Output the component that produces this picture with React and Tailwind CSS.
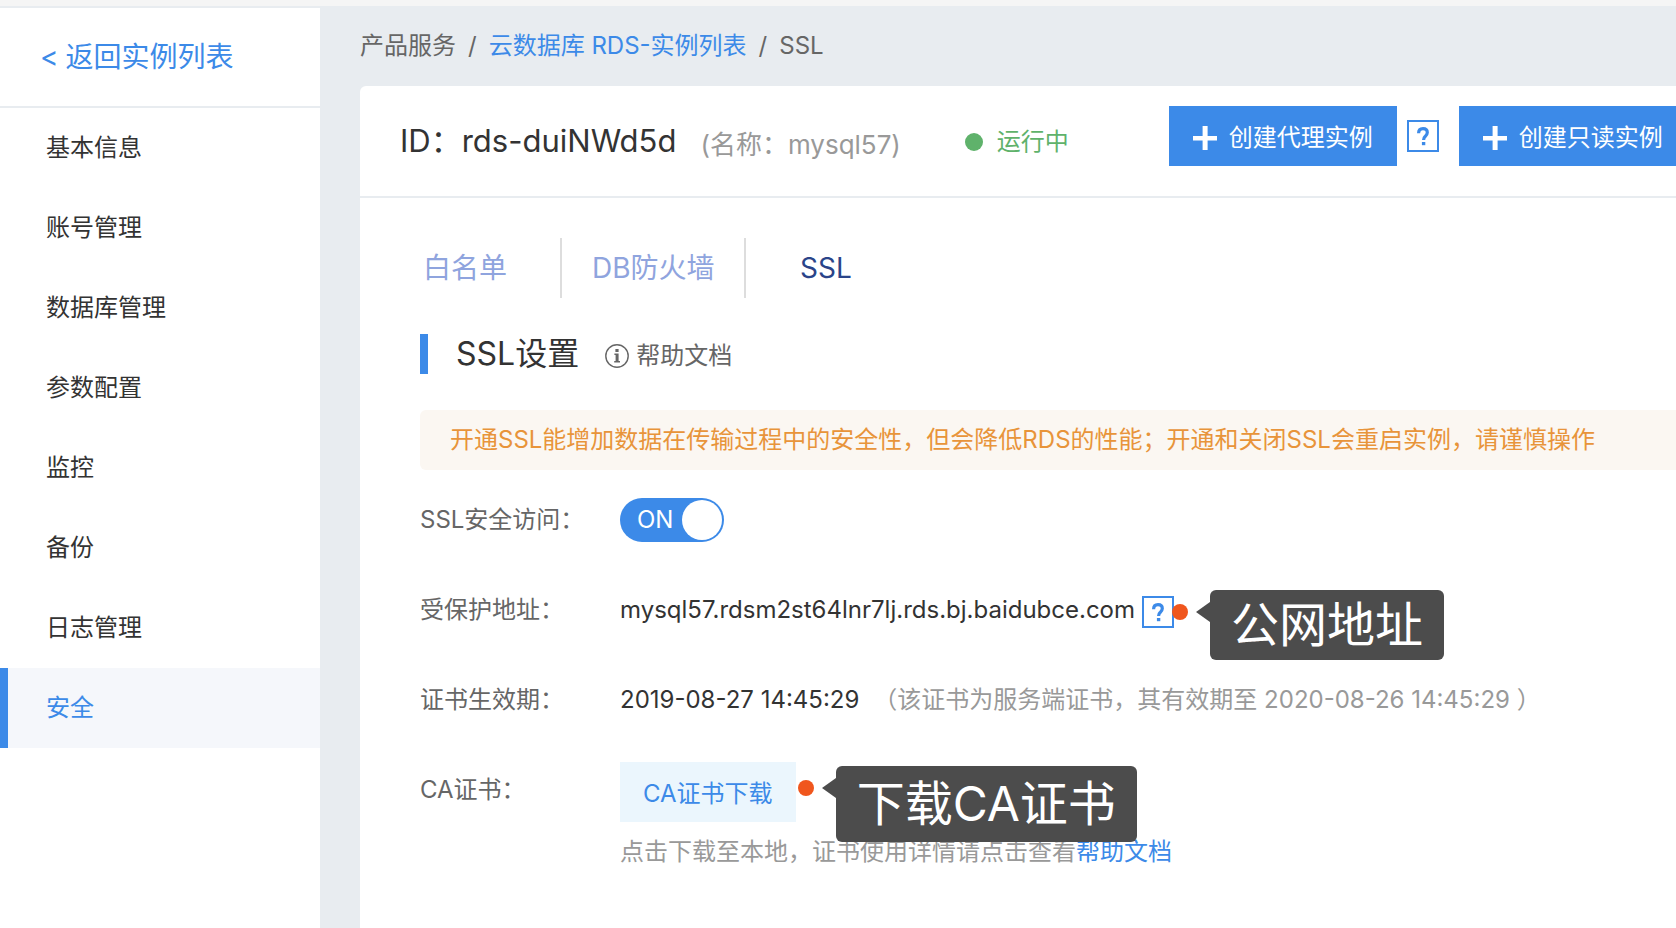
import { useState } from "react";

const NAV = [
  "基本信息",
  "账号管理",
  "数据库管理",
  "参数配置",
  "监控",
  "备份",
  "日志管理",
  "安全",
];

function Plus() {
  return (
    <svg className="h-6 w-6 shrink-0" viewBox="0 0 24 24" aria-hidden="true">
      <path d="M0 10h24v4.6H0z M9.6 0h5v24h-5z" fill="#fff" />
    </svg>
  );
}

function HelpBox({ label }) {
  return (
    <button
      type="button"
      aria-label={label}
      className="flex h-8 w-8 shrink-0 items-center justify-center border-2 border-[#3c8ae8] bg-white"
    >
      <svg className="h-5 w-4" viewBox="0 0 16 20" aria-hidden="true">
        <path
          d="M3.6 7.2C3.6 4.2 5.4 2.6 8 2.6c2.7 0 4.3 1.5 4.3 3.9 0 1.9-1 2.8-2.2 4-1.3 1.2-1.5 2-1.5 3.4"
          fill="none"
          stroke="#3c8ae8"
          strokeWidth="3.2"
        />
        <path d="M6.9 16h3.4v3.2H6.9z" fill="#3c8ae8" />
      </svg>
    </button>
  );
}

function CreateButton({ children }) {
  return (
    <button
      type="button"
      className="flex h-[60px] shrink-0 items-center gap-3 bg-[#3c8ae8] px-6 pt-1 text-white"
    >
      <Plus />
      {children}
    </button>
  );
}

function Callout({ children, className, bubbleClassName }) {
  return (
    <div className={`absolute left-full z-10 flex items-start ${className}`}>
      <span className="mt-[14px] h-4 w-4 shrink-0 rounded-full bg-[#f0561d]" />
      <svg className="mt-3 ml-2 h-5 w-[14px] shrink-0" viewBox="0 0 14 20" aria-hidden="true">
        <path d="M0 10L14 0v20z" fill="#4c4c4c" />
      </svg>
      <span
        className={`rounded-md bg-[#4c4c4c] px-[21px] text-5xl whitespace-nowrap text-white ${bubbleClassName}`}
      >
        {children}
      </span>
    </div>
  );
}

function Row({ label, children }) {
  return (
    <div className="flex">
      <div className="w-[200px] shrink-0 leading-[60px] text-[#666]">{label}</div>
      <div className="min-w-0 flex-1 whitespace-nowrap">{children}</div>
    </div>
  );
}

export default function App() {
  const [on, setOn] = useState(true);
  return (
    <div className="flex min-h-screen flex-col overflow-hidden border-t-6 border-[#f5f5f5] bg-[#e8ecf0] pt-0.5 font-['Inter','Noto_Sans_CJK_SC',sans-serif] text-2xl font-normal text-[#333]">
      <div className="flex flex-1">
        <aside className="w-80 shrink-0 bg-white">
          <div className="flex h-[100px] items-center border-b-2 border-[#e8ecf0] pl-10">
            <a href="#list" className="flex gap-[7px] text-[28px] leading-10 text-[#3c8ae8]">
              <span>&lt;</span>
              返回实例列表
            </a>
          </div>
          <nav>
            {NAV.map((item) =>
              item === "安全" ? (
                <a
                  key={item}
                  href="#nav"
                  aria-current="page"
                  className="block border-l-8 border-[#3c8ae8] bg-[#f5f7fb] pl-[38px] leading-[80px] text-[#3c8ae8]"
                >
                  {item}
                </a>
              ) : (
                <a key={item} href="#nav" className="block pl-[46px] leading-[80px]">
                  {item}
                </a>
              ),
            )}
          </nav>
        </aside>

        <div className="flex min-w-0 flex-1 flex-col pl-10">
          <div className="flex h-[78px] items-center gap-3 pb-0.5 whitespace-nowrap text-[#666]">
            <span>产品服务</span>
            <span>/</span>
            <a href="#rds" className="text-[#3c8ae8]">
              云数据库 RDS-实例列表
            </a>
            <span>/</span>
            <span>SSL</span>
          </div>

          <main className="flex-1 rounded-tl-md bg-white">
            <header className="flex h-28 items-start border-b-2 border-[#e8ecf0] pt-5 pl-10 whitespace-nowrap">
              <h1 className="text-[31px] leading-[70px]">ID：rds-duiNWd5d</h1>
              <span className="ml-6 text-[26px] leading-[78px] text-[#999]">(名称：mysql57)</span>
              <div className="ml-16 flex items-center gap-[14px] leading-[72px] text-[#5fb26b]">
                <span className="h-[18px] w-[18px] rounded-full bg-[#5fb26b]" />
                运行中
              </div>
              <div className="ml-[100px] flex items-center">
                <CreateButton>创建代理实例</CreateButton>
                <div className="mr-5 ml-[10px]">
                  <HelpBox label="代理实例说明" />
                </div>
                <CreateButton>创建只读实例</CreateButton>
              </div>
            </header>

            <div className="pl-[60px]">
              <nav className="mt-10 flex h-[60px] items-stretch text-[28px] leading-[60px] text-[#8fa4de]">
                <a href="#white" className="w-[142px] border-r-2 border-[#ddd] pl-[3px]">
                  白名单
                </a>
                <a href="#fw" className="w-[184px] border-r-2 border-[#ddd] pl-[30px]">
                  DB防火墙
                </a>
                <a href="#ssl" aria-current="page" className="pl-[54px] text-[#2a4489]">
                  SSL
                </a>
              </nav>

              <div className="mt-9 flex h-10 items-center border-l-8 border-[#3c8ae8] pl-7">
                <h2 className="text-[32px] leading-10">SSL设置</h2>
                <a href="#help" className="ml-[26px] flex items-center gap-[7px] pt-1 leading-10 text-[#666]">
                  <svg className="h-6 w-6" viewBox="0 0 24 24" aria-hidden="true">
                    <circle cx="12" cy="12" r="11.2" fill="none" stroke="#666" strokeWidth="1.4" />
                    <path d="M10.4 5h3.2v3h-3.2z M9.4 9.6h4.2V17H15v1.4H9.2V17h1.4v-6H9.4z" fill="#666" />
                  </svg>
                  帮助文档
                </a>
              </div>

              <p className="mt-9 h-[60px] rounded-l-md bg-[#fbf7f2] pl-[30px] leading-[60px] whitespace-nowrap text-[#e8943a]">
                开通SSL能增加数据在传输过程中的安全性，但会降低RDS的性能；开通和关闭SSL会重启实例，请谨慎操作
              </p>

              <div className="mt-5 flex flex-col gap-[30px]">
                <Row label={<label htmlFor="ssl-switch">SSL安全访问：</label>}>
                  <label className="relative mt-2 flex h-11 w-[104px] items-center justify-between rounded-full bg-[#3c8ae8] pr-0.5 pl-[17px] text-white">
                    <input
                      id="ssl-switch"
                      type="checkbox"
                      role="switch"
                      className="sr-only"
                      checked={on}
                      onChange={(e) => setOn(e.target.checked)}
                    />
                    <span>{on ? "ON" : "OFF"}</span>
                    <span className="h-10 w-10 rounded-full bg-white" />
                  </label>
                </Row>

                <Row label="受保护地址：">
                  <div className="relative flex h-[60px] w-fit items-center gap-[7px]">
                    <span>mysql57.rdsm2st64lnr7lj.rds.bj.baidubce.com</span>
                    <div className="pt-1">
                      <HelpBox label="地址说明" />
                    </div>
                    <Callout className="top-[10px] -ml-0.5" bubbleClassName="leading-[70px]">
                      公网地址
                    </Callout>
                  </div>
                </Row>

                <Row label="证书生效期：">
                  <span className="leading-[60px]">2019-08-27 14:45:29</span>
                  <span className="ml-[14px] leading-[60px] text-[#999]">
                    （该证书为服务端证书，其有效期至 2020-08-26 14:45:29 ）
                  </span>
                </Row>

                <Row label="CA证书：">
                  <div className="relative mt-0.5 w-fit">
                    <button type="button" className="h-[60px] bg-[#ebf6fd] px-[23px] pt-1 text-[#3c8ae8]">
                      CA证书下载
                    </button>
                    <Callout className="top-1 ml-0.5" bubbleClassName="leading-[76px]">
                      下载CA证书
                    </Callout>
                  </div>
                  <p className="leading-[60px] text-[#999]">
                    点击下载至本地，证书使用详情请点击查看
                    <a href="#doc" className="text-[#3c8ae8]">
                      帮助文档
                    </a>
                  </p>
                </Row>
              </div>
            </div>
          </main>
        </div>
      </div>
    </div>
  );
}
